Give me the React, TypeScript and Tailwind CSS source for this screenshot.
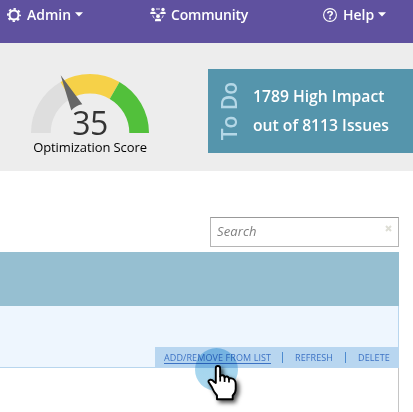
import React from 'react';

function Gear() {
  return (
    <svg className="h-[14px] w-[14px] shrink-0" viewBox="0 0 14 14" fill="none" stroke="#fff">
      <circle cx="7" cy="7" r="4.5" strokeWidth="2" />
      <circle cx="7" cy="7" r="6.1" strokeWidth="1.8" strokeDasharray="2.4 2.391" strokeDashoffset="1.2" />
    </svg>
  );
}

function People() {
  return (
    <svg className="h-[15px] w-[16px] shrink-0" viewBox="0 0 16 15" fill="#fff">
      <circle cx="3" cy="2.5" r="1.7" />
      <path d="M.3 7V6Q.3 4.7 1.6 4.7H4.4Q5.6 4.7 5.6 6V7Z" />
      <circle cx="13" cy="2.5" r="1.7" />
      <path d="M10.4 7V6Q10.4 4.7 11.6 4.7H14.4Q15.7 4.7 15.7 6V7Z" />
      <circle cx="8" cy="9.2" r="1.9" />
      <path d="M5 14.2V13Q5 11.7 6.4 11.7H9.6Q11 11.7 11 13V14.2Z" />
      <path d="M6 2H10M2.8 8.3Q3 10.3 4.5 11.3M13.2 8.3Q13 10.3 11.5 11.3M5.8 6.2L6.8 7.4M10.2 6.2L9.2 7.4" fill="none" stroke="#fff" strokeWidth=".9" />
    </svg>
  );
}

function HelpIcon() {
  return (
    <svg className="h-[14px] w-[14px] shrink-0" viewBox="0 0 14 14" fill="none" stroke="#fff">
      <circle cx="7" cy="7" r="6.4" strokeWidth="1.1" />
      <path d="M4.8 5.4Q4.9 3.5 7 3.5Q9.2 3.5 9.2 5.3Q9.2 6.3 8 6.9Q7 7.4 7 8.6" strokeWidth="1.7" />
      <path d="M7 9.6V11.3" strokeWidth="1.8" />
    </svg>
  );
}

function Caret() {
  return (
    <svg className="h-[5px] w-[8px] shrink-0" viewBox="0 0 8 5" fill="#fff">
      <path d="M0 .2H8L4 4.6Z" />
    </svg>
  );
}

function Gauge() {
  return (
    <svg className="h-[75px] w-[120px]" viewBox="30 65 120 75">
      <path d="M31 133A59 59 0 0 1 60.5 81.9L70.3 98.9A39.3 39.3 0 0 0 50.7 133Z" fill="#dedede" />
      <path d="M60.5 81.9A59 59 0 0 1 119.5 81.9L109.7 98.9A39.3 39.3 0 0 0 70.3 98.9Z" fill="#f6d148" />
      <path d="M119.5 81.9A59 59 0 0 1 149 133H129.3A39.3 39.3 0 0 0 109.7 98.9Z" fill="#52c03b" />
      <path d="M60.7 75.3L82.3 104.3Q75.5 105.5 71.3 110.5Z" fill="#666" />
    </svg>
  );
}

function Cursor() {
  return (
    <>
      <div className="absolute left-[195px] top-[348px] h-[43px] w-[43px] rounded-full bg-linear-to-b from-[#a0d4ef] to-[#acd8ee] mix-blend-multiply" />
      <svg className="absolute left-[188px] top-[340px] h-[72px] w-[64px]" viewBox="188 340 64 72">
        <defs>
          <filter id="shadow" x="-40%" y="-30%" width="190%" height="180%">
            <feDropShadow dx="2.5" dy="2.5" stdDeviation="2" floodColor="#000" floodOpacity=".7" />
          </filter>
        </defs>
        <path
          d="M215.8 383V368Q215.8 366 217.9 366Q220.1 366 220.1 368V376.5Q220.5 375 222.5 375.2Q224.6 375.5 224.6 377.7Q225.2 376.2 227 376.5Q229 376.9 229 379.2Q229.5 378 231.5 378.4Q235.7 379.4 235.7 384V389Q235.7 393 232.7 395.5V399.3H217V395.5Q213.7 392 211.8 387L208.7 382.3Q207.9 380.3 210 379.8Q212 379.4 213.6 381.4Z"
          fill="#fff" stroke="#000" strokeWidth="1.9" strokeLinejoin="round" filter="url(#shadow)"
        />
        <path d="M220.2 376V381.5M224.6 377V382M229 379V382.5" stroke="#000" strokeWidth="1.7" fill="none" />
      </svg>
    </>
  );
}

export default function App() {
  return (
    <div className="relative h-[412px] w-[413px] overflow-hidden bg-white font-['Open_Sans',sans-serif]">
      <header className="flex h-[43px] items-start bg-[#5f519f] pt-[4px] text-[14px] font-semibold leading-[20px] text-white">
        <div className="ml-[7px] flex h-[21px] w-[143px] items-center">
          <Gear />
          <span className="ml-[6px] w-[48px] whitespace-nowrap">Admin</span>
          <Caret />
        </div>
        <div className="flex h-[21px] w-[173px] items-center">
          <People />
          <span className="ml-[5px] tracking-[-0.2px]">Community</span>
        </div>
        <div className="flex h-[21px] items-center">
          <HelpIcon />
          <span className="ml-[6px] w-[35px] whitespace-nowrap">Help</span>
          <Caret />
        </div>
      </header>

      <section className="flex h-[128px] bg-[#ededed]">
        <div className="ml-[30px] mt-[22px] w-[178px]">
          <Gauge />
          <div className="-mt-[32px] h-[31px] w-[120px] text-center text-[32px] leading-[30px] tracking-[-0.5px] text-[#333]">35</div>
          <div className="w-[120px] whitespace-nowrap text-center text-[13px] leading-[16px] tracking-[-0.1px] text-black">Optimization Score</div>
        </div>
        <div className="mt-[26px] flex h-[84px] w-[205px] items-center bg-[#5595ac]">
          <div className="flex h-full w-[45px] items-center justify-center pr-[3px]">
            <span className="rotate-180 whitespace-nowrap text-[21px] font-semibold leading-[24px] text-[#b5d8e7] [writing-mode:vertical-rl]">To Do</span>
          </div>
          <div className="whitespace-nowrap text-[15.7px] font-semibold leading-[29px] text-white">
            <div>1789 High Impact</div>
            <div>out of 8113 Issues</div>
          </div>
        </div>
      </section>

      <main className="w-[399px]">
        <div className="flex h-[81px] justify-end pt-[46px]">
          <div className="flex h-[30px] w-[189px] justify-between border border-[#b5b5b5] border-t-[#999] bg-white pl-[6px] pr-[6px]">
            <span className="text-[13px] italic leading-[27px] tracking-[0.1px] text-[#808080]">Search</span>
            <svg className="mt-[7px] h-[7px] w-[7px]" viewBox="0 0 7 7"><path d="M1 1L6 6M6 1L1 6" stroke="#deded5" strokeWidth="2" /></svg>
          </div>
        </div>
        <div className="h-[54px] bg-[#96bfd1]" />
        <div className="flex h-[62px] items-end justify-end border-b border-r border-[#b8d6ee] bg-[#eef6fe]">
          <div className="-mb-px flex h-[21px] w-[243px] items-center bg-[#b8d6f0] pl-[9px] text-[9px] leading-[12px] tracking-[0.1px] text-[#3c72c4]">
            <span className="w-[107px] whitespace-nowrap border-b border-[#3c72c4] leading-[11px]">ADD/REMOVE FROM LIST</span>
            <span className="ml-[11px] h-[11px] w-px bg-[#4d8bd0]" />
            <span className="ml-[12px] w-[39px] whitespace-nowrap">REFRESH</span>
            <span className="ml-[11px] h-[11px] w-px bg-[#4d8bd0]" />
            <span className="ml-[12px] whitespace-nowrap">DELETE</span>
          </div>
        </div>
        <div className="h-[44px] border-r border-[#c5c5c5]" />
      </main>
      <Cursor />
    </div>
  );
}
